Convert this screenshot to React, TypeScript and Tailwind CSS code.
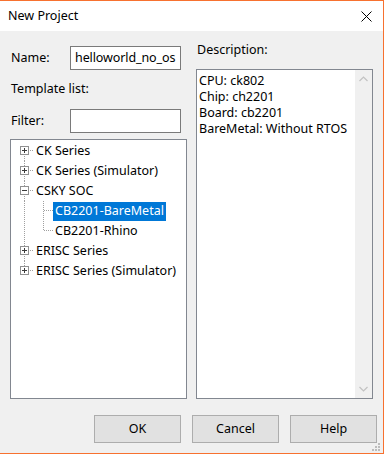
import React from 'react';

const font = { fontFamily: '"Noto Sans", "Liberation Sans", sans-serif' };

type Pos = 'first' | 'mid' | 'last';

// connector + expander box for a top-level tree node
const RootGlyph: React.FC<{ pos: Pos; open?: boolean }> = ({ pos, open }) => (
  <svg width="23" height="20" className="shrink-0" shapeRendering="crispEdges">
    {pos !== 'first' && <line x1="13.5" y1="0" x2="13.5" y2="5" stroke="#a0a0a0" strokeDasharray="1 1" />}
    {pos !== 'last' && <line x1="13.5" y1="15" x2="13.5" y2="20" stroke="#a0a0a0" strokeDasharray="1 1" />}
    <line x1="19" y1="9.5" x2="23" y2="9.5" stroke="#a0a0a0" strokeDasharray="1 1" />
    <rect x="9.5" y="5.5" width="8" height="8" fill="#fff" stroke="#919191" />
    <line x1="11" y1="9.5" x2="16" y2="9.5" stroke="#3c3c3c" />
    {!open && <line x1="13.5" y1="7" x2="13.5" y2="12" stroke="#3c3c3c" />}
  </svg>
);

const ChildGlyph: React.FC<{ last?: boolean }> = ({ last }) => (
  <svg width="42" height="20" className="shrink-0" shapeRendering="crispEdges">
    <line x1="13.5" y1="0" x2="13.5" y2="20" stroke="#a0a0a0" strokeDasharray="1 1" />
    <line x1="32.5" y1="0" x2="32.5" y2={last ? 10 : 20} stroke="#a0a0a0" strokeDasharray="1 1" />
    <line x1="33" y1="9.5" x2="42" y2="9.5" stroke="#a0a0a0" strokeDasharray="1 1" />
  </svg>
);

const Chevron: React.FC<{ up?: boolean }> = ({ up }) => (
  <svg width="9" height="6" viewBox="0 0 9 6">
    <polyline
      points={up ? '0.5,5 4.5,1 8.5,5' : '0.5,1 4.5,5 8.5,1'}
      fill="none"
      stroke="#c2c2c2"
      strokeWidth="1.2"
    />
  </svg>
);

const Btn: React.FC<{ label: string }> = ({ label }) => (
  <button className="w-[87px] h-[28px] bg-[#e1e1e1] border border-[#adadad] text-[12.5px] text-black">
    {label}
  </button>
);

export default function App() {
  return (
    <div className="w-[385px] h-[455px] bg-white" style={font}>
      <div className="relative w-[384px] h-[454px] border-t border-r border-b border-[#f7712f] bg-[#f0f0f0] flex flex-col text-[12.5px] text-black">
        {/* title bar */}
        <div className="h-[30px] bg-white flex items-center justify-between pl-[8px] pr-[10px]">
          <span className="leading-[16px]">New Project</span>
          <svg width="11" height="11" viewBox="0 0 11 11" className="mr-[1px]">
            <path d="M0.5 0.5 L10.5 10.5 M10.5 0.5 L0.5 10.5" stroke="#000" strokeWidth="1" />
          </svg>
        </div>

        <div className="flex pl-[10px] gap-[9px]">
          {/* left column */}
          <div className="w-[177px] flex flex-col">
            <div className="mt-[15px] h-[24px] flex items-center">
              <span className="w-[60px] pl-[1px]">Name:</span>
              <div className="w-[111px] h-[24px] border border-[#7a7a7a] bg-white flex items-center pl-[4px] leading-[16px] whitespace-nowrap overflow-hidden tracking-[-0.1px]">
                helloworld_no_os
              </div>
            </div>
            <div className="mt-[11px] h-[16px] leading-[16px] pl-[1px]">Template list:</div>
            <div className="mt-[12px] h-[24px] flex items-center">
              <span className="w-[60px] pl-[1px]">Filter:</span>
              <div className="w-[111px] h-[24px] border border-[#7a7a7a] bg-white" />
            </div>
            <div className="mt-[6px] h-[260px] border border-[#828790] bg-white pt-[1px]">
              <div className="h-[20px] flex items-center">
                <RootGlyph pos="first" />
                <span className="ml-[2px]">CK Series</span>
              </div>
              <div className="h-[20px] flex items-center">
                <RootGlyph pos="mid" />
                <span className="ml-[2px]">CK Series (Simulator)</span>
              </div>
              <div className="h-[20px] flex items-center">
                <RootGlyph pos="mid" open />
                <span className="ml-[2px]">CSKY SOC</span>
              </div>
              <div className="h-[20px] flex items-center">
                <ChildGlyph />
                <span className="h-[19px] px-[2px] flex items-center bg-[#0078d7] text-white">CB2201-BareMetal</span>
              </div>
              <div className="h-[20px] flex items-center">
                <ChildGlyph last />
                <span className="ml-[2px]">CB2201-Rhino</span>
              </div>
              <div className="h-[20px] flex items-center">
                <RootGlyph pos="mid" />
                <span className="ml-[2px]">ERISC Series</span>
              </div>
              <div className="h-[20px] flex items-center">
                <RootGlyph pos="last" />
                <span className="ml-[2px]">ERISC Series (Simulator)</span>
              </div>
            </div>
          </div>

          {/* right column */}
          <div className="w-[177px] flex flex-col">
            <div className="mt-[11px] h-[16px] leading-[16px] pl-[1px]">Description:</div>
            <div className="mt-[11px] h-[330px] border border-[#828790] bg-white flex">
              <div className="flex-1 pl-[2px] pt-[3px] leading-[16px] whitespace-nowrap">
                <div>CPU: ck802</div>
                <div>Chip: ch2201</div>
                <div>Board: cb2201</div>
                <div>BareMetal: Without RTOS</div>
              </div>
              <div className="w-[17px] bg-[#f0f0f0] flex flex-col justify-between items-center py-[6px]">
                <Chevron up />
                <Chevron />
              </div>
            </div>
          </div>
        </div>

        {/* buttons */}
        <div className="mt-[16px] flex justify-end gap-[11px] pr-[6px]">
          <Btn label="OK" />
          <Btn label="Cancel" />
          <Btn label="Help" />
        </div>

        {/* size grip */}
        <svg width="8" height="8" className="absolute right-[3px] bottom-[2px]" shapeRendering="crispEdges">
          <rect x="6" y="0" width="2" height="2" fill="#bcbcbc" />
          <rect x="3" y="3" width="2" height="2" fill="#bcbcbc" />
          <rect x="6" y="3" width="2" height="2" fill="#bcbcbc" />
          <rect x="0" y="6" width="2" height="2" fill="#bcbcbc" />
          <rect x="3" y="6" width="2" height="2" fill="#bcbcbc" />
          <rect x="6" y="6" width="2" height="2" fill="#bcbcbc" />
        </svg>
      </div>
    </div>
  );
}
